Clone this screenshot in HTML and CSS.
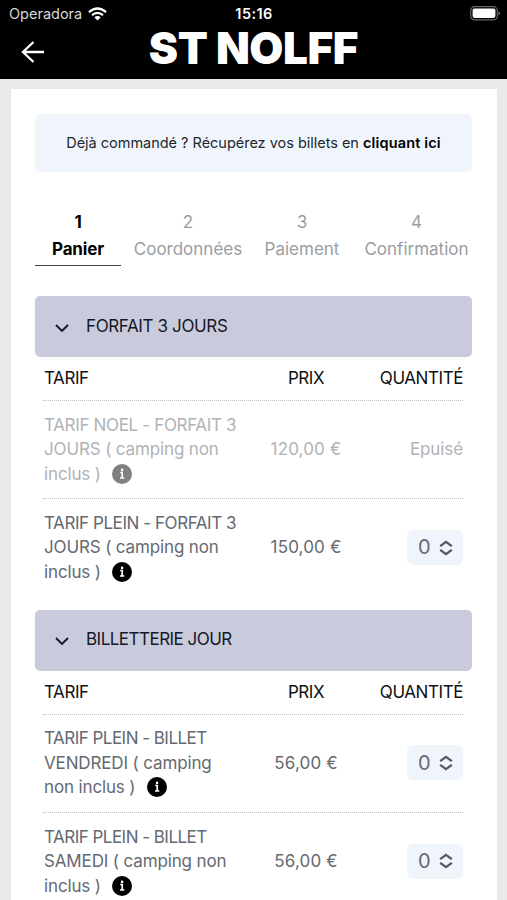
FILE: index.html
```html
<!DOCTYPE html>
<html lang="fr">
<head>
<meta charset="utf-8">
<meta name="viewport" content="width=device-width">
<title>ST NOLFF</title>
<link rel="stylesheet" href="styles.css">
</head>
<body>
<svg class="defs" width="0" height="0" aria-hidden="true">
  <symbol id="chevron" viewBox="0 0 16 10"><path d="M2 2l6 6 6-6" fill="none" stroke="#151828" stroke-width="1.9"/></symbol>
  <symbol id="info" viewBox="0 0 20 20"><circle cx="10" cy="10" r="10" fill="currentColor"/><path d="M8.2 8.500h2v5M8 14h4.300" fill="none" stroke="#fff" stroke-width="1.700"/><circle cx="10.100" cy="5.900" r="1.300" fill="#fff"/></symbol>
  <symbol id="updown" viewBox="0 0 14 16"><path d="M1.2 6.2L7 1.8l5.800 4.400M1.200 9.800L7 14.200l5.800-4.400" fill="none" stroke="#50555e" stroke-width="2.1"/></symbol>
</svg>
<header class="top">
  <div class="status">
    <div class="carrier"><span>Operadora</span>
      <svg width="19" height="14" viewBox="0 0 19 14"><path d="M1 5.200Q9.500-2.200 18 5.200M4 8.200Q9.500 3.600 15 8.200" fill="none" stroke="#fff" stroke-width="2.300"/><path d="M6.300 10.300Q9.500 7.700 12.700 10.300L9.500 13.500z" fill="#fff"/></svg>
    </div>
    <div class="clock">15:16</div>
    <svg class="battery" width="31" height="15" viewBox="0 0 31 15"><rect x=".7" y=".7" width="26.600" height="13.200" rx="4" fill="none" stroke="#666" stroke-width="1.200"/><rect x="2.600" y="2.600" width="22.800" height="9.400" rx="2" fill="#fff"/><path d="M28.500 5q3 2.300 0 4.600z" fill="#777"/></svg>
  </div>
  <div class="nav">
    <svg class="back" width="24" height="24" viewBox="0 0 24 24"><path d="M23 12H2M12.500 2L2 12l10.500 10" fill="none" stroke="#fff" stroke-width="2.300"/></svg>
    <h1>ST NOLFF</h1>
  </div>
</header>
<main class="card">
  <p class="notice">Déjà commandé ? Récupérez vos billets en <b>cliquant ici</b></p>
  <ol class="steps">
    <li class="active"><span>1</span><span>Panier</span></li>
    <li><span>2</span><span>Coordonnées</span></li>
    <li><span>3</span><span>Paiement</span></li>
    <li><span>4</span><span>Confirmation</span></li>
  </ol>
  <section>
    <h2><svg width="16" height="10"><use href="#chevron"/></svg><span>FORFAIT 3 JOURS</span></h2>
    <div class="table">
      <div class="row head"><div>TARIF</div><div class="price">PRIX</div><div class="qty">QUANTITÉ</div></div>
      <div class="row soldout"><div><span class="wide">TARIF NOEL - FORFAIT 3</span><br><span class="loose">JOURS ( camping non<br>inclus )</span> <svg class="info" width="20" height="20"><use href="#info"/></svg></div><div class="price">120,00 €</div><div class="qty">Epuisé</div></div>
      <div class="row"><div>TARIF PLEIN - FORFAIT 3<br><span class="loose">JOURS ( camping non<br>inclus )</span> <svg class="info" width="20" height="20"><use href="#info"/></svg></div><div class="price">150,00 €</div><div class="qty"><span class="select"><span>0</span><svg width="14" height="16"><use href="#updown"/></svg></span></div></div>
    </div>
  </section>
  <section>
    <h2><svg width="16" height="10"><use href="#chevron"/></svg><span class="tight">BILLETTERIE JOUR</span></h2>
    <div class="table">
      <div class="row head"><div>TARIF</div><div class="price">PRIX</div><div class="qty">QUANTITÉ</div></div>
      <div class="row"><div><span class="tight">TARIF PLEIN - BILLET</span><br><span class="loose">VENDREDI ( camping<br>non inclus )</span> <svg class="info" width="20" height="20"><use href="#info"/></svg></div><div class="price">56,00 €</div><div class="qty"><span class="select"><span>0</span><svg width="14" height="16"><use href="#updown"/></svg></span></div></div>
      <div class="row"><div><span class="tight">TARIF PLEIN - BILLET</span><br><span class="loose">SAMEDI ( camping non<br>inclus )</span> <svg class="info" width="20" height="20"><use href="#info"/></svg></div><div class="price">56,00 €</div><div class="qty"><span class="select"><span>0</span><svg width="14" height="16"><use href="#updown"/></svg></span></div></div>
    </div>
  </section>
</main>
</body>
</html>
```
FILE: styles.css
```css
* { box-sizing: border-box; }
html { height: 100%; overflow: hidden; }
body {
  margin: 0;
  height: 100%;
  overflow: hidden;
  background: #eaeaea;
  font-family: Inter, "Liberation Sans", sans-serif;
  font-size: 17px;
  line-height: 24.5px;
  letter-spacing: -0.43px;
  color: #646972;
}
.defs { display: block; }
.top { height: 79px; background: #000; color: #fff; }
.status {
  display: grid;
  grid-template-columns: 1fr auto 1fr;
  align-items: center;
  height: 27px;
  padding: 0 8px 0 9px;
  line-height: 27px;
}
.carrier { display: flex; align-items: center; gap: 6px; font-size: 14.5px; letter-spacing: 0; color: #d6d6d6; }
.clock { font-size: 14.5px; font-weight: 600; letter-spacing: 0.4px; }
.battery { justify-self: end; margin-right: -2px; }
.nav { display: grid; grid-template-columns: 74px 1fr 74px; align-items: center; height: 50px; }
.back { margin-left: 21px; }
h1 { margin: -8px 0 0; font-size: 44px; line-height: 44px; font-weight: 900; letter-spacing: -0.4px; text-align: center; white-space: nowrap; }
.card { margin: 10px 10px 0 11px; padding: 25px 25px 0 24px; height: 830px; background: #fff; }
.notice {
  margin: 0;
  height: 58px;
  line-height: 57px;
  border-radius: 5px;
  background: #eff5fb;
  color: #23272f;
  font-size: 14.5px;
  letter-spacing: -0.02px;
  text-align: center;
  white-space: nowrap;
}
.notice b { color: #000; font-weight: 600; letter-spacing: 0.15px; }
.steps {
  display: grid;
  grid-template-columns: 86px 134px 94px 135px;
  margin: 36px -12px 0 0;
  padding: 0;
  list-style: none;
  color: #999da3;
  letter-spacing: 0;
}
.steps li { display: flex; flex-direction: column; align-items: center; height: 58px; line-height: 27px; padding-top: 1px; }
.steps .active { color: #000; font-weight: 700; letter-spacing: -0.15px; border-bottom: 1.5px solid #444; }
section { margin-bottom: 12.9px; }
.steps + section { margin-top: 30px; }
h2 {
  display: flex;
  align-items: center;
  gap: 16px;
  height: 61px;
  margin: 0;
  padding-left: 19px;
  border-radius: 5px;
  background: #c9cbdc;
  color: #151828;
  font-size: 17px;
  font-weight: 400;
  letter-spacing: -0.37px;
}
h2 svg { margin-top: 2px; }
h2 span { margin-top: -1px; }
.table { padding: 0 9px 0 8px; }
.row {
  display: grid;
  grid-template-columns: 198px 130px 92px;
  align-items: center;
  height: 98.4px;
  padding-bottom: 0.8px;
  border-top: 1px dotted #bfbfbf;
  white-space: nowrap;
}
.row > div:first-child { padding-left: 1px; }
.row.head { height: 43px; padding-bottom: 0; border: 0; color: #111; }
.row:not(.head) .price { letter-spacing: 0.15px; }
.wide { letter-spacing: -0.34px; }
.loose { letter-spacing: -0.14px; }
.tight { letter-spacing: -0.52px; }
.price { text-align: center; }
.qty { text-align: right; }
.soldout { color: #b0b3b7; }
.soldout .qty { letter-spacing: -0.1px; }
.info { margin-left: 7px; vertical-align: -4px; color: #000; }
.soldout .info { color: #808080; }
.select { display: inline-flex; align-items: center; gap: 9px; width: 56px; height: 35px; padding-left: 11px; border-radius: 6px; background: #eff5fb; font-size: 20px; vertical-align: middle; }
```
